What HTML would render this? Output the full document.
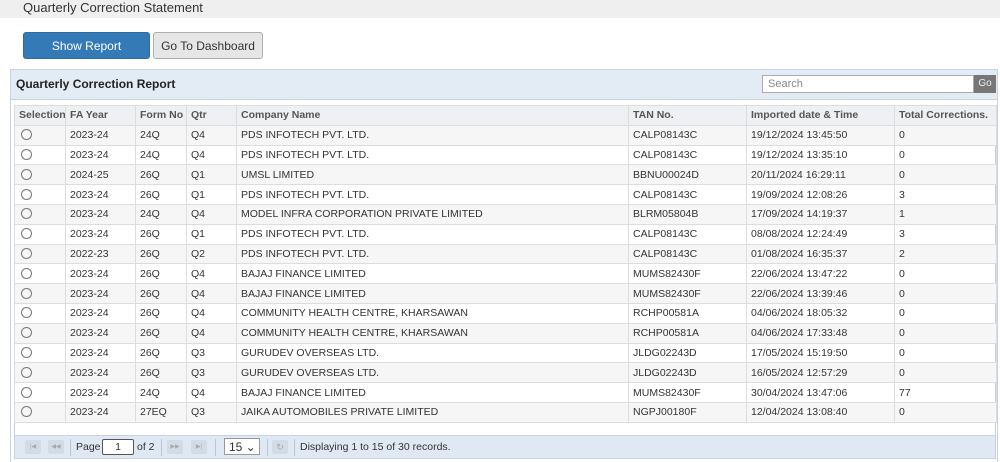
<!DOCTYPE html><html><head><style>
body{margin:0;width:1000px;height:462px;overflow:hidden;background:#fff;font-family:"Liberation Sans",sans-serif;font-size:11px;color:#333;position:relative}
.top{position:absolute;left:0;top:0;width:1000px;height:18px;background:#efefef;font-size:13px;color:#333}
.top span{position:absolute;left:23px;top:0px}
.btn{position:absolute;top:32px;height:27px;line-height:27px;text-align:center;font-size:12px;border-radius:3px;box-sizing:border-box}
.panel{position:absolute;left:10px;top:69px;width:988px;height:393px;border:1px solid #c5d3e2;box-sizing:border-box;border-bottom:none}
.ph{height:29px;background:#e3ebf5;border-bottom:1px solid #c5d3e2;font-weight:bold;font-size:12px;line-height:29px;padding-left:5px;color:#222}
.search{position:absolute;left:751px;top:5px;width:212px;height:18px;border:1px solid #aaa;background:#fff;box-sizing:border-box;font-weight:normal;color:#888;font-size:11px;line-height:16px;padding-left:5px}
.go{position:absolute;left:963px;top:5px;width:22px;height:18px;background:#777;color:#eee;font-weight:normal;font-size:10px;line-height:18px;text-align:center}
.wrap{position:absolute;left:14px;top:105px;width:982px;height:330px;border:1px solid #ccc;border-bottom:none;box-sizing:border-box}
table{position:absolute;left:14px;top:105px;width:982px;border-collapse:collapse;table-layout:fixed}
td,th{height:19.8px;line-height:16px;padding:0 0 0 4px;border:1px solid #ddd;text-align:left;white-space:nowrap;overflow:hidden;font-size:10.5px;box-sizing:border-box}
th{background:#eef0f3;color:#555;font-weight:bold}
tr:nth-child(even) td{background:#f6f6f6}
.r{display:inline-block;width:9px;height:9px;border:1px solid #777;border-radius:50%;margin-left:2px;vertical-align:-2px;box-sizing:content-box}
.pager{position:absolute;left:14px;top:435px;width:982px;height:24px;background:#dfe8f3;border:1px solid #c5d3e2;box-sizing:border-box;font-size:10.5px;line-height:22px;color:#333}
.pager span{position:absolute}
.pb{position:absolute;top:4px;width:16px;height:14px;background:#d2dbe6;border-radius:2px;color:#aaa;font-size:6px;line-height:14px;text-align:center}
.sep{position:absolute;top:3px;width:1px;height:17px;background:#b8c6d6}
</style></head><body>
<div class="top"><span>Quarterly Correction Statement</span></div>
<div class="btn" style="left:23px;width:127px;background:#337ab7;color:#fff;border:1px solid #2e6da4">Show Report</div>
<div class="btn" style="left:153px;width:110px;background:#e6e6e6;color:#333;border:1px solid #adadad">Go To Dashboard</div>
<div class="panel"><div class="ph">Quarterly Correction Report<div class="search">Search</div><div class="go">Go</div></div></div>
<div class="wrap"></div>
<table>
<colgroup><col style="width:51px"><col style="width:70px"><col style="width:51px"><col style="width:50px"><col style="width:392px"><col style="width:118px"><col style="width:148px"><col style="width:102px"></colgroup>
<tr><th>Selection</th><th>FA Year</th><th>Form No</th><th>Qtr</th><th>Company Name</th><th>TAN No.</th><th>Imported date &amp; Time</th><th>Total Corrections.</th></tr>
<tr><td><span class="r"></span></td><td>2023-24</td><td>24Q</td><td>Q4</td><td>PDS INFOTECH PVT. LTD.</td><td>CALP08143C</td><td>19/12/2024 13:45:50</td><td>0</td></tr>
<tr><td><span class="r"></span></td><td>2023-24</td><td>24Q</td><td>Q4</td><td>PDS INFOTECH PVT. LTD.</td><td>CALP08143C</td><td>19/12/2024 13:35:10</td><td>0</td></tr>
<tr><td><span class="r"></span></td><td>2024-25</td><td>26Q</td><td>Q1</td><td>UMSL LIMITED</td><td>BBNU00024D</td><td>20/11/2024 16:29:11</td><td>0</td></tr>
<tr><td><span class="r"></span></td><td>2023-24</td><td>26Q</td><td>Q1</td><td>PDS INFOTECH PVT. LTD.</td><td>CALP08143C</td><td>19/09/2024 12:08:26</td><td>3</td></tr>
<tr><td><span class="r"></span></td><td>2023-24</td><td>24Q</td><td>Q4</td><td>MODEL INFRA CORPORATION PRIVATE LIMITED</td><td>BLRM05804B</td><td>17/09/2024 14:19:37</td><td>1</td></tr>
<tr><td><span class="r"></span></td><td>2023-24</td><td>26Q</td><td>Q1</td><td>PDS INFOTECH PVT. LTD.</td><td>CALP08143C</td><td>08/08/2024 12:24:49</td><td>3</td></tr>
<tr><td><span class="r"></span></td><td>2022-23</td><td>26Q</td><td>Q2</td><td>PDS INFOTECH PVT. LTD.</td><td>CALP08143C</td><td>01/08/2024 16:35:37</td><td>2</td></tr>
<tr><td><span class="r"></span></td><td>2023-24</td><td>26Q</td><td>Q4</td><td>BAJAJ FINANCE LIMITED</td><td>MUMS82430F</td><td>22/06/2024 13:47:22</td><td>0</td></tr>
<tr><td><span class="r"></span></td><td>2023-24</td><td>26Q</td><td>Q4</td><td>BAJAJ FINANCE LIMITED</td><td>MUMS82430F</td><td>22/06/2024 13:39:46</td><td>0</td></tr>
<tr><td><span class="r"></span></td><td>2023-24</td><td>26Q</td><td>Q4</td><td>COMMUNITY HEALTH CENTRE, KHARSAWAN</td><td>RCHP00581A</td><td>04/06/2024 18:05:32</td><td>0</td></tr>
<tr><td><span class="r"></span></td><td>2023-24</td><td>26Q</td><td>Q4</td><td>COMMUNITY HEALTH CENTRE, KHARSAWAN</td><td>RCHP00581A</td><td>04/06/2024 17:33:48</td><td>0</td></tr>
<tr><td><span class="r"></span></td><td>2023-24</td><td>26Q</td><td>Q3</td><td>GURUDEV OVERSEAS LTD.</td><td>JLDG02243D</td><td>17/05/2024 15:19:50</td><td>0</td></tr>
<tr><td><span class="r"></span></td><td>2023-24</td><td>26Q</td><td>Q3</td><td>GURUDEV OVERSEAS LTD.</td><td>JLDG02243D</td><td>16/05/2024 12:57:29</td><td>0</td></tr>
<tr><td><span class="r"></span></td><td>2023-24</td><td>24Q</td><td>Q4</td><td>BAJAJ FINANCE LIMITED</td><td>MUMS82430F</td><td>30/04/2024 13:47:06</td><td>77</td></tr>
<tr><td><span class="r"></span></td><td>2023-24</td><td>27EQ</td><td>Q3</td><td>JAIKA AUTOMOBILES PRIVATE LIMITED</td><td>NGPJ00180F</td><td>12/04/2024 13:08:40</td><td>0</td></tr>
</table>
<div class="pager">
<div class="pb" style="left:10px">|◀</div><div class="pb" style="left:33px">◀◀</div>
<div class="sep" style="left:55px"></div>
<span style="left:61px">Page</span>
<span style="left:87px;top:3px;width:30px;height:14px;border:1px solid #555;background:#fff;line-height:14px;text-align:center;border-radius:2px">1</span>
<span style="left:122px">of 2</span>
<div class="sep" style="left:146px"></div>
<div class="pb" style="left:152px">▶▶</div><div class="pb" style="left:176px">▶|</div>
<div class="sep" style="left:200px"></div>
<span style="left:209px;top:2px;width:36px;height:17px;border:1px solid #999;background:#fff;line-height:17px;font-size:12px;padding-left:4px;box-sizing:border-box">15 ⌄</span>
<div class="sep" style="left:252px"></div>
<div class="pb" style="left:257px;font-size:9px">↻</div>
<div class="sep" style="left:279px"></div>
<span style="left:285px">Displaying 1 to 15 of 30 records.</span>
</div>
</body></html>
